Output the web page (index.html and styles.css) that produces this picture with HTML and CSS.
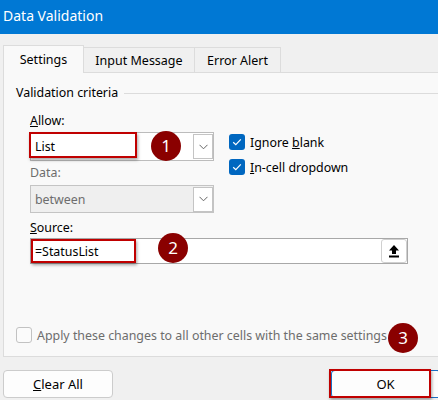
FILE: index.html
```html
<!DOCTYPE html>
<html lang="en">
<head>
<meta charset="UTF-8">
<title>Data Validation</title>
<link rel="stylesheet" href="styles.css">
</head>
<body>
<div class="dialog">
    <div class="titlebar">Data Validation</div>

    <div class="tabs">
        <div class="tab active">Settings</div>
        <div class="tab">Input Message</div>
        <div class="tab">Error Alert</div>
    </div>

    <div class="panel">
        <div class="group-title">
            <span>Validation criteria</span>
            <div class="group-line"></div>
        </div>

        <div class="fields">
            <div class="top-row">
                <div class="left-col">
                    <div class="label"><u>A</u>llow:</div>
                    <div class="combo">
                        <div class="combo-text">List</div>
                        <div class="drop-btn">
                            <svg width="9" height="6" viewBox="0 0 9 6"><path d="M0.5 0.8 L4.5 4.8 L8.5 0.8" fill="none" stroke="#666" stroke-width="1"/></svg>
                        </div>
                        <div class="mark mark-allow"></div>
                        <div class="badge badge-1">1</div>
                    </div>
                    <div class="label muted">Data:</div>
                    <div class="combo disabled">
                        <div class="combo-text">between</div>
                        <div class="drop-btn">
                            <svg width="9" height="6" viewBox="0 0 9 6"><path d="M0.5 0.8 L4.5 4.8 L8.5 0.8" fill="none" stroke="#666" stroke-width="1"/></svg>
                        </div>
                    </div>
                </div>
                <div class="checks">
                    <div class="check-row">
                        <span class="box checked">
                            <svg width="16" height="16" viewBox="0 0 16 16"><path d="M4.2 8.2 L6.8 10.6 L11.8 5.4" fill="none" stroke="#fff" stroke-width="1.2"/></svg>
                        </span>
                        <span>Ignore <u>b</u>lank</span>
                    </div>
                    <div class="check-row">
                        <span class="box checked">
                            <svg width="16" height="16" viewBox="0 0 16 16"><path d="M4.2 8.2 L6.8 10.6 L11.8 5.4" fill="none" stroke="#fff" stroke-width="1.2"/></svg>
                        </span>
                        <span><u>I</u>n-cell dropdown</span>
                    </div>
                </div>
            </div>

            <div class="label source-label"><u>S</u>ource:</div>
            <div class="source">
                <div class="combo-text">=StatusList</div>
                <div class="ref-btn">
                    <svg width="12" height="14" viewBox="0 0 12 14"><path d="M6 1 L11 6.5 L8 6.5 L8 10 L4 10 L4 6.5 L1 6.5 Z" fill="#000"/><rect x="1" y="11.5" width="10" height="2" fill="#000"/></svg>
                </div>
                <div class="mark mark-source"></div>
                <div class="badge badge-2">2</div>
            </div>
        </div>

        <div class="apply-row">
            <span class="box empty"></span>
            <span>Apply these changes to all other cells with the same settings</span>
            <div class="badge badge-3">3</div>
        </div>
    </div>

    <div class="footer">
        <div class="btn"><u>C</u>lear All</div>
        <div class="btn ok">OK<div class="mark mark-ok"></div></div>
    </div>
</div>
</body>
</html>
```

FILE: styles.css
```css
body {
    margin: 0;
    font-family: "Noto Sans", "Open Sans", sans-serif;
    font-size: 12.4px;
    color: #000;
    background: #f0f0f0;
    overflow: hidden;
}

.dialog {
    width: 438px;
    height: 400px;
    background: #f0f0f0;
}

.titlebar {
    height: 34px;
    line-height: 32px;
    background: #0078d4;
    color: #fff;
    font-size: 14px;
    padding-left: 3px;
}

/* tabs */
.tabs {
    display: flex;
    align-items: flex-end;
    margin-left: 3px;
    height: 38px;
}
.tab {
    height: 25px;
    line-height: 25px;
    border: 1px solid #dcdcdc;
    border-bottom: none;
    border-left: none;
    font-size: 12.5px;
    text-align: center;
    box-sizing: border-box;
}
.tab:nth-child(2) { width: 111px; }
.tab:nth-child(3) { width: 86px; }
.tab.active {
    width: 81px;
    height: 28px;
    line-height: 28px;
    border-left: 1px solid #dcdcdc;
    background: #f9f9f9;
    margin-bottom: -1px;
    position: relative;
    z-index: 1;
}

/* panel */
.panel {
    margin-left: 3px;
    height: 285px;
    box-sizing: border-box;
    border: 1px solid #dcdcdc;
    border-right: none;
    background: #f9f9f9;
    padding-left: 12px;
}
.group-title {
    display: flex;
    align-items: center;
    margin-top: 12px;
    height: 16px;
    line-height: 16px;
}
.group-line {
    flex: 1;
    height: 1px;
    background: #dcdcdc;
    margin-left: 6px;
}

.fields {
    padding-left: 14px;
}
.top-row {
    display: flex;
}
.left-col {
    width: 184px;
}
.label {
    height: 16px;
    line-height: 16px;
    margin-top: 12px;
    margin-bottom: 3px;
}
.label.muted {
    color: #6d6d6d;
    margin-top: 4px;
    margin-bottom: 4px;
}

.combo {
    position: relative;
    display: flex;
    align-items: center;
    height: 29px;
    box-sizing: border-box;
    border: 1px solid #bcbcbc;
    background: #fff;
}
.combo.disabled {
    height: 28px;
    background: #efefef;
    color: #6d6d6d;
    border-color: #c4c4c4;
}
.combo-text {
    flex: 1;
    padding-left: 4px;
}
.drop-btn {
    width: 20px;
    height: 25px;
    box-sizing: border-box;
    border: 1px solid #c4c4c4;
    background: #fff;
    display: flex;
    align-items: center;
    justify-content: center;
}

.checks {
    padding-top: 33px;
    padding-left: 15px;
}
.check-row {
    display: flex;
    align-items: center;
    height: 16px;
    gap: 5px;
    margin-bottom: 9px;
}
.box {
    width: 16px;
    height: 16px;
    box-sizing: border-box;
    border-radius: 3px;
    flex: none;
}
.box svg { display: block; }
.box.checked {
    background: #0067c0;
}
.box.empty {
    border: 1px solid #c2c2c2;
    background: #fbfbfb;
}

.source-label {
    margin-top: 7px;
    margin-bottom: 2px;
}
.source {
    position: relative;
    display: flex;
    align-items: center;
    width: 378px;
    height: 26px;
    box-sizing: border-box;
    border: 1px solid #a8a8a8;
    background: #fff;
}
.ref-btn {
    width: 26px;
    height: 24px;
    box-sizing: border-box;
    border: 1px solid #d0d0d0;
    border-radius: 3px;
    display: flex;
    align-items: center;
    justify-content: center;
}

.apply-row {
    position: relative;
    display: flex;
    align-items: center;
    gap: 5px;
    height: 16px;
    margin-top: 63px;
    color: #6d6d6d;
}

/* annotations */
.mark {
    position: absolute;
    border: 2px solid #c00000;
    box-shadow: 1px 2px 3px rgba(0, 0, 0, 0.35);
    pointer-events: none;
}
.mark-allow {
    left: -2px;
    top: -1px;
    width: 104px;
    height: 22px;
}
.mark-source {
    left: 0;
    top: 0;
    width: 101px;
    height: 20px;
}
.mark-ok {
    left: -3px;
    top: -2px;
    width: 98px;
    height: 25px;
}
.badge {
    position: absolute;
    width: 30px;
    height: 30px;
    border-radius: 50%;
    background: #8a0000;
    color: #fff;
    font-size: 17px;
    line-height: 30px;
    text-align: center;
}
.badge-1 { left: 120px; top: -2px; }
.badge-2 { left: 127px; top: -6px; }
.badge-3 { left: 372px; top: -4px; }

/* footer */
.footer {
    display: flex;
    justify-content: space-between;
    padding: 13px 0 0 3px;
}
.btn {
    position: relative;
    width: 110px;
    height: 28px;
    line-height: 26px;
    box-sizing: border-box;
    border: 1px solid #cccccc;
    border-radius: 4px;
    background: #fdfdfd;
    text-align: center;
    font-size: 13px;
}
.btn.ok {
    width: 110px;
    margin-right: -3px;
    border: 1px solid #1a6fc4;
    border-right-width: 2px;
}
```
